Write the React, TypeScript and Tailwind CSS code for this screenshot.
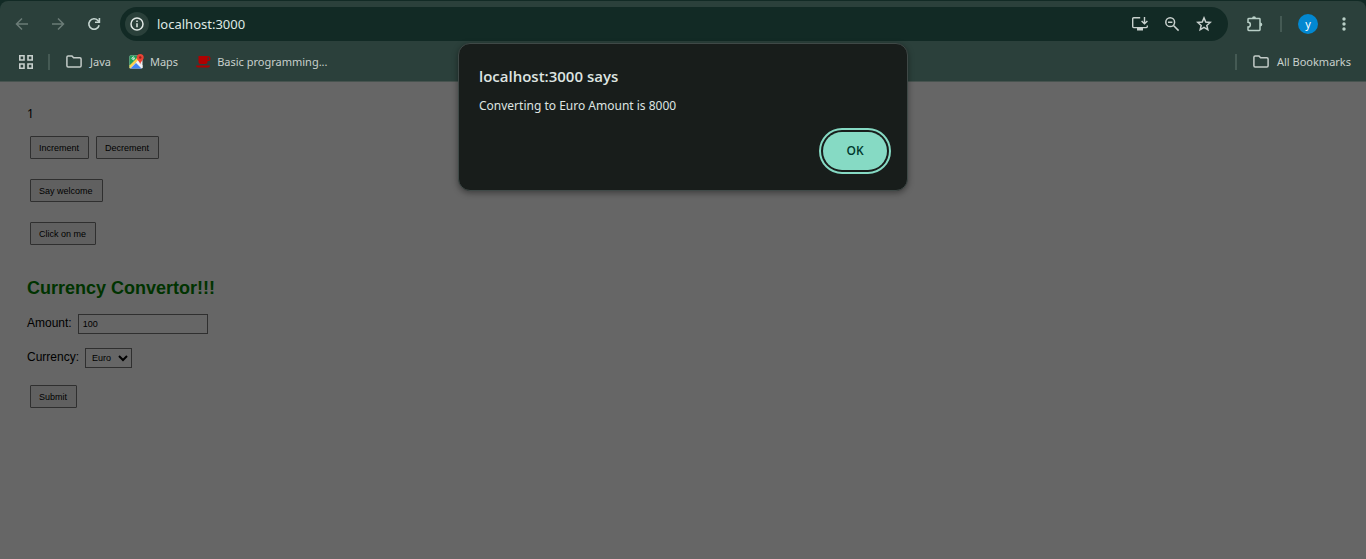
import type { ButtonHTMLAttributes, ReactNode } from "react";

function IconButton({ label, children, className = "" }: { label: string; children: ReactNode; className?: string }) {
  return (
    <button type="button" aria-label={label} className={`flex shrink-0 items-center justify-center ${className}`}>
      {children}
    </button>
  );
}

function FolderIcon() {
  return (
    <svg width="16" height="13" viewBox="0 0 16 13" fill="none" stroke="#c3cbc8" strokeWidth="1.5" strokeLinejoin="round">
      <path d="M.9 10.8V2.2Q.9.9 2.1.9H5.8L7.6 2.7H13.9Q15.1 2.7 15.1 3.9V10.8Q15.1 12 13.9 12H2.1Q.9 12 .9 10.8Z" />
    </svg>
  );
}

function MapsIcon() {
  return (
    <svg width="15" height="15" viewBox="0 0 15 15">
      <rect x="0.5" y="1.5" width="13" height="13" rx="1.2" fill="#e8eaed" />
      <path d="M.5 2.7Q.5 1.5 1.7 1.5H9L7 8 .5 13.5Z" fill="#1e9e58" />
      <path d="M.5 11.5 9.5 2.5 11 4 1 14.5Q.5 14 .5 13.3Z" fill="#ffd04b" />
      <path d="M1.5 14.500 7 9l5.500 5.500Z" fill="#4285f4" />
      <path d="M7.500 8.500 9 7l4.500 4.500v2.200l-.5.5Z" fill="#f1f3f4" />
      <path d="M5.700 4.400H4.200M5.300 3.400A1.300 1.300 0 1 0 5.500 5" fill="none" stroke="#fff" strokeWidth=".9" />
      <path d="M11.200 0a3.500 3.500 0 0 1 3.500 3.500c0 2.600-2.900 3.500-3.500 6.900-.6-3.400-3.500-4.300-3.500-6.900A3.500 3.500 0 0 1 11.200 0Z" fill="#ea4335" />
      <circle cx="11.200" cy="3.500" r="1.200" fill="#8f211b" />
    </svg>
  );
}

function CupIcon() {
  return (
    <svg width="15" height="12" viewBox="0 0 15 12">
      <path d="M2.500 0H11.500V6Q11.500 8 9.500 8H4.500Q2.500 8 2.500 6Z" fill="#b00000" />
      <path d="M11 .8H12.500Q13.800.8 13.800 2V3Q13.800 4.300 12.500 4.300H11" fill="none" stroke="#b00000" strokeWidth="1.300" />
      <path d="M0 9.500H14Q14 11.500 12 11.500H2Q0 11.500 0 9.500Z" fill="#b00000" />
    </svg>
  );
}

function Toolbar() {
  return (
    <div className="flex h-[46px] items-center pr-3">
      <IconButton label="Back" className="ml-3 size-5">
        <svg width="14" height="14" viewBox="0 0 14 14" fill="none" stroke="#6b7c77" strokeWidth="1.5">
          <path d="M13 7H2M7 1.500 1.500 7 7 12.500" />
        </svg>
      </IconButton>
      <IconButton label="Forward" className="ml-4 size-5">
        <svg width="14" height="14" viewBox="0 0 14 14" fill="none" stroke="#6b7c77" strokeWidth="1.500">
          <path d="M1 7h11M7 1.500 12.500 7 7 12.500" />
        </svg>
      </IconButton>
      <IconButton label="Reload" className="ml-4 size-5">
        <svg width="14" height="14" viewBox="0 0 14 14" fill="none" stroke="#c5d5d0" strokeWidth="1.600">
          <path d="M12.100 8.200A5.200 5.200 0 1 1 10.900 3.500L12.300 5" />
          <path d="M12.400 1V5.300H8" />
        </svg>
      </IconButton>
      <div className="ml-4 flex h-[34px] min-w-0 flex-1 items-center rounded-full bg-[#122a25] px-[5px]">
        <IconButton label="View site information" className="size-6 rounded-full bg-[#2a403a]">
          <svg width="14" height="14" viewBox="0 0 14 14" fill="none" stroke="#e0e8e5" strokeWidth="1.500">
            <circle cx="7" cy="7" r="6" />
            <path d="M7 6.200V10.200M7 3.600V5" />
          </svg>
        </IconButton>
        <input
          aria-label="Address"
          defaultValue="localhost:3000"
          className="ml-2 min-w-0 flex-1 bg-transparent text-[13px] leading-5 text-[#dfe8e4] outline-none"
        />
        <IconButton label="Install app" className="size-5">
          <svg width="18" height="16" viewBox="0 0 18 16" fill="none" stroke="#c9d1ce" strokeWidth="1.400">
            <path d="M9.200 1.700H2.700Q1.700 1.700 1.700 2.700V10.600Q1.700 11.600 2.700 11.600H15.300Q16.300 11.600 16.300 10.600V9.500" />
            <path d="M13.500 1V7.400M10.600 4.900l2.900 2.900 2.900-2.900" />
            <path d="M6 12h6v2.500H6Z" fill="#c9d1ce" stroke="none" />
          </svg>
        </IconButton>
        <IconButton label="Zoom" className="ml-3 size-5">
          <svg width="16" height="16" viewBox="0 0 16 16" fill="none" stroke="#c9d1ce" strokeWidth="1.500">
            <circle cx="6.200" cy="6.200" r="4.400" />
            <path d="M9.500 9.500 14.600 14.600M4 6.200H8.400" />
          </svg>
        </IconButton>
        <IconButton label="Bookmark this tab" className="ml-3 mr-[9px] size-5">
          <svg width="16" height="16" viewBox="0 0 16 16" fill="none" stroke="#c9d1ce" strokeWidth="1.500">
            <path d="m8 1.900 1.750 4.150 4.450.4-3.370 2.950 1 4.400L8 11.450 4.170 13.800l1-4.400L1.800 6.450l4.450-.4Z" />
          </svg>
        </IconButton>
      </div>
      <IconButton label="Extensions" className="ml-4 size-5">
        <svg width="18" height="18" viewBox="0 0 18 18" fill="none" stroke="#b9cfc7" strokeWidth="1.500">
          <path d="M4 3.500H14.300Q15 3.500 15 4.200V14.800Q15 15.500 14.300 15.500H3.700Q3 15.500 3 14.800V12A2.300 2.300 0 0 0 3 7.300V4.200Q3 3.500 4 3.500Z" />
          <path d="M7 3.500a2 2.300 0 0 1 4 0ZM15 7.500a2.300 2 0 0 1 0 4Z" fill="#b9cfc7" stroke="none" />
        </svg>
      </IconButton>
      <span className="ml-4 h-4 w-0.5 bg-[#455a54]" />
      <IconButton label="Profile" className="ml-4 size-5 rounded-full bg-[#0288d1] text-[11px] leading-4 text-white">
        y
      </IconButton>
      <IconButton label="Menu" className="ml-4 size-5">
        <svg width="4" height="16" viewBox="0 0 4 16" fill="#b9cfc7">
          <circle cx="2" cy="3" r="1.700" />
          <circle cx="2" cy="8" r="1.700" />
          <circle cx="2" cy="13" r="1.700" />
        </svg>
      </IconButton>
    </div>
  );
}

function Bookmarks() {
  return (
    <nav aria-label="Bookmarks" className="flex h-[34px] items-center pb-[5px] text-[11px] leading-4 text-[#c8d0cd]">
      <IconButton label="Apps" className="ml-4 size-5">
        <svg width="14" height="14" viewBox="0 0 14 14" fill="none" stroke="#c8d0cd" strokeWidth="1.600">
          <path d="M.8.8h4.200v4.200H.8ZM9 .8h4.200v4.200H9ZM.8 9h4.200v4.200H.8ZM9 9h4.200v4.200H9Z" />
        </svg>
      </IconButton>
      <span className="ml-3 h-4 w-0.5 bg-[#455a54]" />
      <button type="button" className="ml-4 flex items-center gap-2">
        <FolderIcon />
        Java
      </button>
      <a href="#maps" className="ml-[18px] flex items-center gap-[6px]">
        <MapsIcon />
        Maps
      </a>
      <a href="#programming" className="ml-[18px] flex items-center gap-[6px]">
        <CupIcon />
        Basic programming...
      </a>
      <span className="ml-auto h-4 w-0.5 bg-[#455a54]" />
      <button type="button" className="ml-4 mr-[15px] flex items-center gap-2">
        <FolderIcon />
        All Bookmarks
      </button>
    </nav>
  );
}

function PageButton({ children, ...rest }: ButtonHTMLAttributes<HTMLButtonElement>) {
  return (
    <button
      {...rest}
      className="ml-[3px] h-[23px] rounded-[1px] border border-[#2f2f2f] bg-[#606060] pr-[9px] pl-2 text-[9px] leading-3 text-black"
    >
      {children}
    </button>
  );
}

function Page() {
  return (
    <main className="flex-1 bg-[#666666] px-[27px] pt-6 font-['Liberation_Sans',Arial,sans-serif] text-[12px] leading-4 text-black">
      <p className="font-['Noto_Sans',sans-serif]">1</p>
      <div className="mt-[14px] flex gap-1">
        <PageButton type="button">Increment</PageButton>
        <PageButton type="button">Decrement</PageButton>
      </div>
      <div className="mt-5 flex">
        <PageButton type="button">Say welcome</PageButton>
      </div>
      <div className="mt-5 flex">
        <PageButton type="button">Click on me</PageButton>
      </div>
      <h1 className="mt-[31px] text-[18px] leading-6 font-bold text-[#003300]">Currency Convertor!!!</h1>
      <form onSubmit={(e) => e.preventDefault()}>
        <div className="mt-[14px] flex items-center gap-[6px]">
          <label htmlFor="amount" className="pb-[2px]">Amount:</label>
          <input
            id="amount"
            defaultValue="100"
            className="h-5 w-[130px] border border-[#2f2f2f] bg-[#666666] px-1 text-[9px] leading-3"
          />
        </div>
        <div className="mt-[14px] flex items-center gap-[6px]">
          <label htmlFor="currency" className="pb-[2px]">Currency:</label>
          <select
            id="currency"
            defaultValue="Euro"
            className="h-5 w-[47px] border border-[#2f2f2f] bg-[#666666] pl-[2px] text-[9px] leading-3"
          >
            <option>Euro</option>
          </select>
        </div>
        <div className="mt-[17px] flex">
          <PageButton type="submit">Submit</PageButton>
        </div>
      </form>
    </main>
  );
}

function AlertDialog() {
  return (
    <div
      role="alertdialog"
      aria-labelledby="alert-title"
      aria-describedby="alert-text"
      className="absolute top-[43px] left-1/2 flex w-[450px] -translate-x-1/2 flex-col rounded-xl border border-[#3f4947] bg-[#181d1b] p-5 text-[#dee4e1] shadow-[0_2px_6px_rgba(0,0,0,0.4)]"
    >
      <h2 id="alert-title" className="font-['Open_Sans',sans-serif] text-[15px] leading-6 font-semibold">
        localhost:3000 says
      </h2>
      <p id="alert-text" className="mt-2 text-[12px] leading-5">Converting to Euro Amount is 8000</p>
      <button
        type="button"
        className="mt-4 h-[38px] w-16 self-end rounded-full bg-[#86dac4] font-['Open_Sans',sans-serif] text-[12px] leading-4 font-semibold text-[#00382d] outline-2 outline-offset-2 outline-[#86dac4]"
      >
        OK
      </button>
    </div>
  );
}

export default function App() {
  return (
    <div className="relative flex min-h-screen flex-col bg-[#122a25] pt-px font-['Noto_Sans','Open_Sans',sans-serif]">
      <header className="rounded-t-lg border-b border-[#47534f] bg-[#2b403b]">
        <Toolbar />
        <Bookmarks />
      </header>
      <Page />
      <AlertDialog />
    </div>
  );
}
